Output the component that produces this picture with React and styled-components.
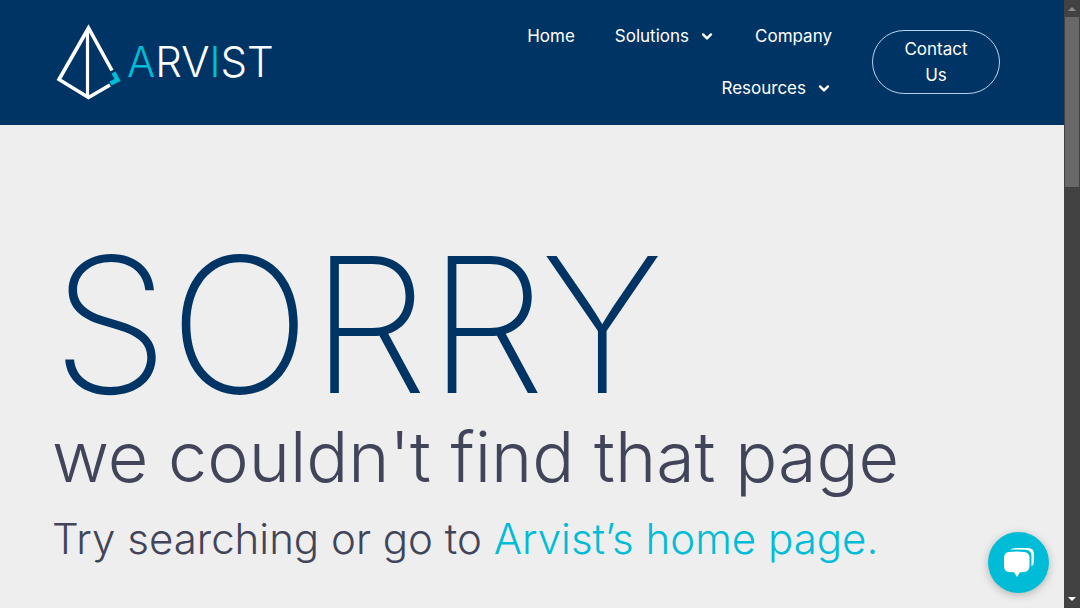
import React from "react";
import styled, { createGlobalStyle } from "styled-components";

const navy = "#003465";
const cyan = "#00bcd7";
const slate = "#424459";

const GlobalStyle = createGlobalStyle`
  *, *::before, *::after { box-sizing: border-box; }
  body {
    margin: 0;
    background: #eeeeee;
    color: ${slate};
    font-family: Inter, "Open Sans", sans-serif;
    font-size: 17px;
  }
`;

const Frame = styled.div`
  display: grid;
  grid-template-columns: minmax(0, 1fr) 16px;
  height: 100vh;
  overflow: hidden;
`;

const Page = styled.div`
  min-width: 0;
  overflow: hidden;
`;

const Header = styled.header`
  display: flex;
  align-items: center;
  gap: 20px;
  padding: 10px 64px 11px 56px;
  background: ${navy};
  color: #ffffff;
`;

const Brand = styled.a`
  display: flex;
  align-items: center;
  gap: 5px;
  margin-right: auto;
  color: inherit;
  text-decoration: none;
`;

const BrandMark = styled.svg`
  width: 66px;
  height: 78px;
`;

const BrandName = styled.span`
  font-size: 42px;
  font-weight: 300;
  line-height: 52px;
`;

const Accent = styled.span`
  color: ${cyan};
`;

const Nav = styled.nav`
  display: flex;
  flex: 0 1 400px;
  flex-wrap: wrap;
  justify-content: flex-end;
`;

const NavLink = styled.a`
  display: flex;
  align-items: center;
  gap: 10px;
  padding: 0 20px;
  color: inherit;
  line-height: 52px;
  text-decoration: none;
`;

const Caret = styled.svg`
  width: 16px;
  height: 16px;
`;

const ContactButton = styled.button`
  width: 128px;
  padding: 5px 28px;
  border: 1px solid #b5d3ea;
  border-radius: 32px;
  background: transparent;
  color: inherit;
  font: inherit;
  line-height: 26px;
`;

const Message = styled.main`
  padding: 108px 52px 0;
`;

const Title = styled.h1`
  margin: 0;
  color: ${navy};
  font-size: 188px;
  font-weight: 200;
  line-height: 184px;
`;

const Subtitle = styled.h2`
  margin: 0;
  font-size: 70px;
  font-weight: 300;
  line-height: 80px;
`;

const Hint = styled.p`
  margin: 14px 0 0;
  font-size: 42px;
  font-weight: 300;
  line-height: 56px;
`;

const HomeLink = styled.a`
  color: ${cyan};
  text-decoration: none;
`;

const ChatButton = styled.button`
  position: fixed;
  right: 31px;
  bottom: 15px;
  display: grid;
  place-items: center;
  width: 61px;
  height: 61px;
  padding: 0;
  border: 0;
  border-radius: 50%;
  background: ${cyan};
  box-shadow: 0 2px 8px rgba(0, 0, 0, 0.25);
`;

const Track = styled.div`
  display: flex;
  flex-direction: column;
  align-items: center;
  background: #424242;
`;

const Thumb = styled.div`
  width: 14px;
  height: 28%;
  margin: 1px 0 auto;
  background: #686868;
`;

const Arrow = styled.svg`
  width: 16px;
  height: 16px;
  fill: ${(props) => props.$tone};
`;

function Chevron() {
  return (
    <Caret viewBox="0 0 16 16" aria-hidden="true">
      <path d="M4 6.4 8 10.4 12 6.4" fill="none" stroke="#fff" strokeWidth="2.4" strokeLinecap="round" strokeLinejoin="round" />
    </Caret>
  );
}

const links = [
  { label: "Home" },
  { label: "Solutions", menu: true },
  { label: "Company" },
  { label: "Resources", menu: true },
];

export default function App() {
  return (
    <>
      <GlobalStyle />
      <Frame>
        <Page>
          <Header>
            <Brand href="#">
              <BrandMark viewBox="0 0 66 78" aria-hidden="true">
                <path d="M56 47.5 32.5 5 3 56.5 32.5 74.5 54 62" fill="none" stroke="#fff" strokeWidth="3.6" />
                <path d="M31.5 7V73" stroke="#fff" strokeWidth="3.2" />
                <path d="M57.5 49.5 61.5 57 54.5 60.5" fill="none" stroke={cyan} strokeWidth="4.5" />
              </BrandMark>
              <BrandName>
                <Accent>A</Accent>RV<Accent>I</Accent>ST
              </BrandName>
            </Brand>
            <Nav aria-label="Main">
              {links.map((link) => (
                <NavLink href="#" key={link.label}>
                  {link.label}
                  {link.menu && <Chevron />}
                </NavLink>
              ))}
            </Nav>
            <ContactButton type="button">Contact Us</ContactButton>
          </Header>
          <Message>
            <Title>SORRY</Title>
            <Subtitle>we couldn't find that page</Subtitle>
            <Hint>
              Try searching or go to <HomeLink href="#">Arvist’s home page.</HomeLink>
            </Hint>
          </Message>
        </Page>
        <Track aria-hidden="true">
          <Arrow $tone="#8b8b8b" viewBox="0 0 16 16"><path d="M4 11 8 7l4 4z" /></Arrow>
          <Thumb />
          <Arrow $tone="#ffffff" viewBox="0 0 16 16"><path d="M4 5h8L8 9z" /></Arrow>
        </Track>
      </Frame>
      <ChatButton type="button" aria-label="Open chat">
        <svg width="32" height="32" viewBox="0 0 32 32" fill="#fff" aria-hidden="true">
          <path d="M7 2.5Q9 1 13 1H25Q31 1 31 7V13Q31 18 28.5 19.5V9Q28.5 3 22.5 2.8Q14 2.3 7 2.5Z" />
          <path d="M6 5Q14 4.2 21 5 26.5 5.4 26.5 11V19Q26.5 24.5 21 25L17 25.3 14 30 11 25.3 6 25Q1 24.5 1 19V11Q1 5.4 6 5Z" />
        </svg>
      </ChatButton>
    </>
  );
}
